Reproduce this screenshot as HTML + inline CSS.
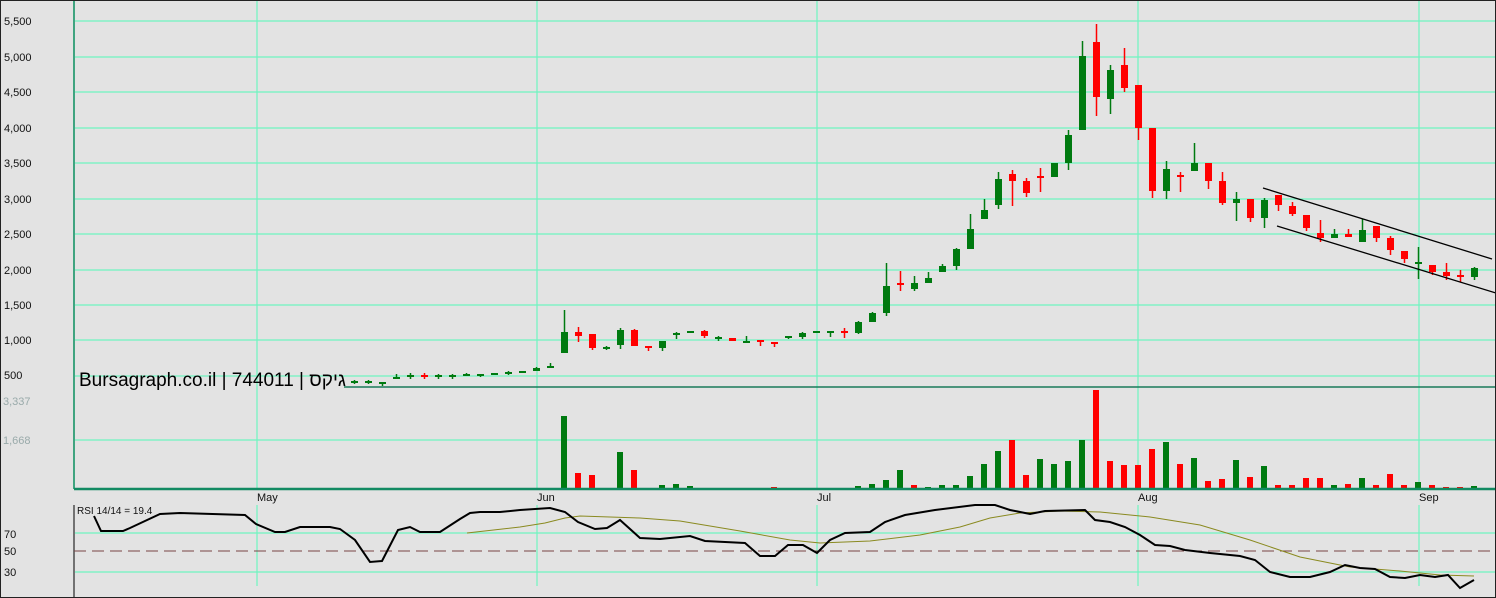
<!DOCTYPE html>
<html><head><meta charset="utf-8"><style>
html,body{margin:0;padding:0;background:#e3e3e3;width:1496px;height:598px;overflow:hidden}
svg{display:block}
text{font-family:"Liberation Sans",sans-serif}
</style></head><body>
<svg id="s" width="1496" height="598" xmlns="http://www.w3.org/2000/svg">
<rect x="0" y="0" width="1496" height="598" fill="#e3e3e3"/>
<g id="grid" stroke="#6ff5c0" stroke-width="1.2" fill="none"></g>
<g id="vol"></g>
<g id="cand"></g>
<g font-size="11" fill="#111">
<text x="4" y="25">5,500</text><text x="4" y="61">5,000</text><text x="4" y="96">4,500</text>
<text x="4" y="132">4,000</text><text x="4" y="167">3,500</text><text x="4" y="203">3,000</text>
<text x="4" y="238">2,500</text><text x="4" y="274">2,000</text><text x="4" y="309">1,500</text>
<text x="4" y="344">1,000</text><text x="4" y="379">500</text>
<text x="3" y="405" fill="#9aa">3,337</text><text x="3" y="444" fill="#9aa">1,668</text>
<text x="4" y="538">70</text><text x="4" y="555">50</text><text x="4" y="576">30</text>
<text x="257" y="501">May</text><text x="537" y="501">Jun</text><text x="817" y="501">Jul</text>
<text x="1138" y="501">Aug</text><text x="1419" y="501">Sep</text>
<text x="77" y="514" font-size="10">RSI 14/14 = 19.4</text>
</g>
<line x1="74" y1="0" x2="74" y2="489" stroke="#0a9060" stroke-width="1.5"/>
<line x1="344" y1="387" x2="1496" y2="387" stroke="#1a7a5a" stroke-width="1.5"/>
<line x1="74" y1="489" x2="1496" y2="489" stroke="#128a62" stroke-width="2.5"/>
<line x1="74" y1="505" x2="74" y2="597" stroke="#000" stroke-width="1"/>
<line x1="74" y1="551" x2="1496" y2="551" stroke="#7a4444" stroke-width="1" stroke-dasharray="12,6"/>
<polyline fill="none" stroke="#8a8a20" stroke-width="1" points="467,533 520,527 545,523 565,518 580,516 610,517 640,518 680,521 740,531 790,540 820,543 870,541 920,535 960,527 990,518 1020,513 1060,511 1100,512 1150,517 1200,525 1250,540 1300,557 1350,567 1400,571 1440,575 1474,576"/>
<polyline fill="none" stroke="#000" stroke-width="2" points="94,516 101,531 123,531 130,528 160,514 180,513 245,515 256,524 275,532 285,532 300,527 330,527 340,529 355,540 370,562 382,561 398,530 410,527 420,532 440,532 460,519 470,513 480,512 500,512 520,510 550,508 565,512 578,522 595,529 607,528 620,520 640,538 660,539 690,536 705,541 745,543 760,556 775,556 788,545 803,545 817,553 830,540 845,533 870,532 885,522 905,515 935,510 975,505 995,505 1010,510 1030,514 1045,511 1085,510 1095,520 1110,522 1125,527 1140,535 1155,545 1170,546 1185,550 1210,553 1240,556 1255,560 1270,572 1290,577 1310,577 1330,572 1345,565 1360,568 1375,569 1390,577 1405,578 1420,575 1435,577 1448,575 1460,588 1474,580"/>
<line x1="1263" y1="188" x2="1492" y2="259" stroke="#000" stroke-width="1.3"/>
<line x1="1277" y1="226" x2="1496" y2="293" stroke="#000" stroke-width="1.3"/>
<text x="79" y="386" font-size="19" fill="#000" font-family="Liberation Sans, Noto Sans CJK JP, sans-serif">Bursagraph.co.il | 744011 | גיקס</text>
<rect x="0.5" y="0.5" width="1495" height="597" fill="none" stroke="#222" stroke-width="1"/>
</svg>
<script>
var NS="http://www.w3.org/2000/svg";
function el(p,t,a){var e=document.createElementNS(NS,t);for(var k in a)e.setAttribute(k,a[k]);p.appendChild(e);return e;}
var g=document.getElementById('grid');
[21,57,92,128,163,199,234,270,305,340,376].forEach(function(y){el(g,'line',{x1:75,y1:y,x2:1496,y2:y});});
el(g,'line',{x1:75,y1:440,x2:1496,y2:440});
[533,572].forEach(function(y){el(g,'line',{x1:75,y1:y,x2:1496,y2:y});});
[257,537,817,1138,1419].forEach(function(x){el(g,'line',{x1:x,y1:0,x2:x,y2:489});el(g,'line',{x1:x,y1:505,x2:x,y2:586});});
var G="#007a10",R="#ff0000";
// [top,bottom,high,low,color]
var d=[
[382,382,380,384,G],[382,382,380,384,G],[383,383,382,386,G],[377,379,374,379,G],[376,376,373,379,G],
[376,376,373,379,R],[376,376,374,379,G],[376,376,374,379,G],[375,375,373,376,G],[375,375,374,377,G],
[373,375,373,375,G],[373,373,371,375,G],[372,372,372,372,G],[368,371,367,371,G],[367,367,363,367,G],
[332,353,310,353,G],[332,336,327,342,R],[334,348,334,350,R],[348,348,346,350,G],[330,345,328,349,G],
[330,346,329,346,R],[347,347,347,351,R],[341,348,341,351,G],[333,335,332,339,G],[331,333,331,333,G],
[331,336,330,338,R],[338,338,336,341,G],[338,341,338,341,R],[342,342,336,343,G],[341,341,340,346,R],
[343,343,343,347,R],[337,337,336,339,G],[333,337,332,339,G],[332,332,331,333,G],[332,332,332,337,G],
[332,332,328,338,R],[322,333,321,334,G],[313,322,312,322,G],[286,313,263,316,G],[284,284,271,291,R],
[283,289,276,291,G],[278,283,272,283,G],[266,272,264,272,G],[249,266,248,270,G],[229,249,214,249,G],
[210,219,199,219,G],[179,205,172,209,G],[174,181,170,206,R],[181,193,178,197,R],[177,177,168,192,R],
[163,177,163,177,G],[135,163,130,170,G],[56,130,41,130,G],[42,97,24,116,R],[70,99,65,114,G],
[65,88,48,92,R],[85,128,85,140,R],[128,191,128,198,R],[169,191,161,199,G],[176,176,172,192,R],
[163,171,143,171,G],[163,181,163,189,R],[181,203,172,205,R],[199,203,192,221,G],[199,218,199,222,R],
[200,218,198,228,G],[195,205,195,211,R],[206,214,202,216,R],[215,228,215,231,R],[233,238,220,242,R],
[234,238,229,238,G],[234,237,229,237,R],[230,242,219,242,G],[226,238,226,242,R],[238,250,236,255,R],
[251,259,251,263,R],[262,264,247,279,G],[265,272,265,275,R],[272,276,263,280,R],[276,276,270,282,R],
[268,277,267,280,G]];
var c=document.getElementById('cand');
d.forEach(function(v,i){var x=354.5+14*i;
 el(c,'line',{x1:x,y1:v[2],x2:x,y2:v[3],stroke:v[4],'stroke-width':1.5});
 var h=v[1]-v[0];
 if(h<2)el(c,'rect',{x:x-3.5,y:v[0]-1,width:7,height:2,fill:v[4]});
 else el(c,'rect',{x:x-3.5,y:v[0],width:7,height:h,fill:v[4]});
});
var vb=document.getElementById('vol');
var vol=[[145,488,G],[158,488,G],[172,488,G],[410,488,G],[424,488,R],[438,488,R],[536,488,G],[550,488,G],
[564,416,G],[578,473,R],[592,475,R],[620,452,G],[634,470,R],[648,488,R],[662,485,G],[676,484,G],[690,486,G],
[704,488,R],[732,488,R],[746,488,R],[760,488,R],[774,487,R],[802,488,G],[830,488,G],[844,488,R],
[858,486,G],[872,484,G],[886,480,G],[900,470,G],[914,485,R],[928,487,G],[942,485,G],[956,485,G],[970,476,G],
[984,464,G],[998,451,G],[1012,440,R],[1026,475,R],[1040,459,G],[1054,464,G],[1068,461,G],[1082,440,G],
[1096,390,R],[1110,461,R],[1124,465,R],[1138,465,R],[1152,449,R],[1166,442,G],[1180,464,R],[1194,458,G],
[1208,481,R],[1222,479,R],[1236,460,G],[1250,477,R],[1264,466,G],[1278,485,R],[1292,485,R],[1306,478,R],
[1320,478,R],[1334,485,G],[1348,484,R],[1362,478,G],[1376,485,R],[1390,474,R],[1404,485,R],[1418,482,G],
[1432,485,R],[1446,487,R],[1460,487,R],[1474,486,G]];
vol.forEach(function(v){el(vb,'rect',{x:v[0]-3,y:v[1],width:6,height:489-v[1],fill:v[2]});});
</script>
</body></html>
